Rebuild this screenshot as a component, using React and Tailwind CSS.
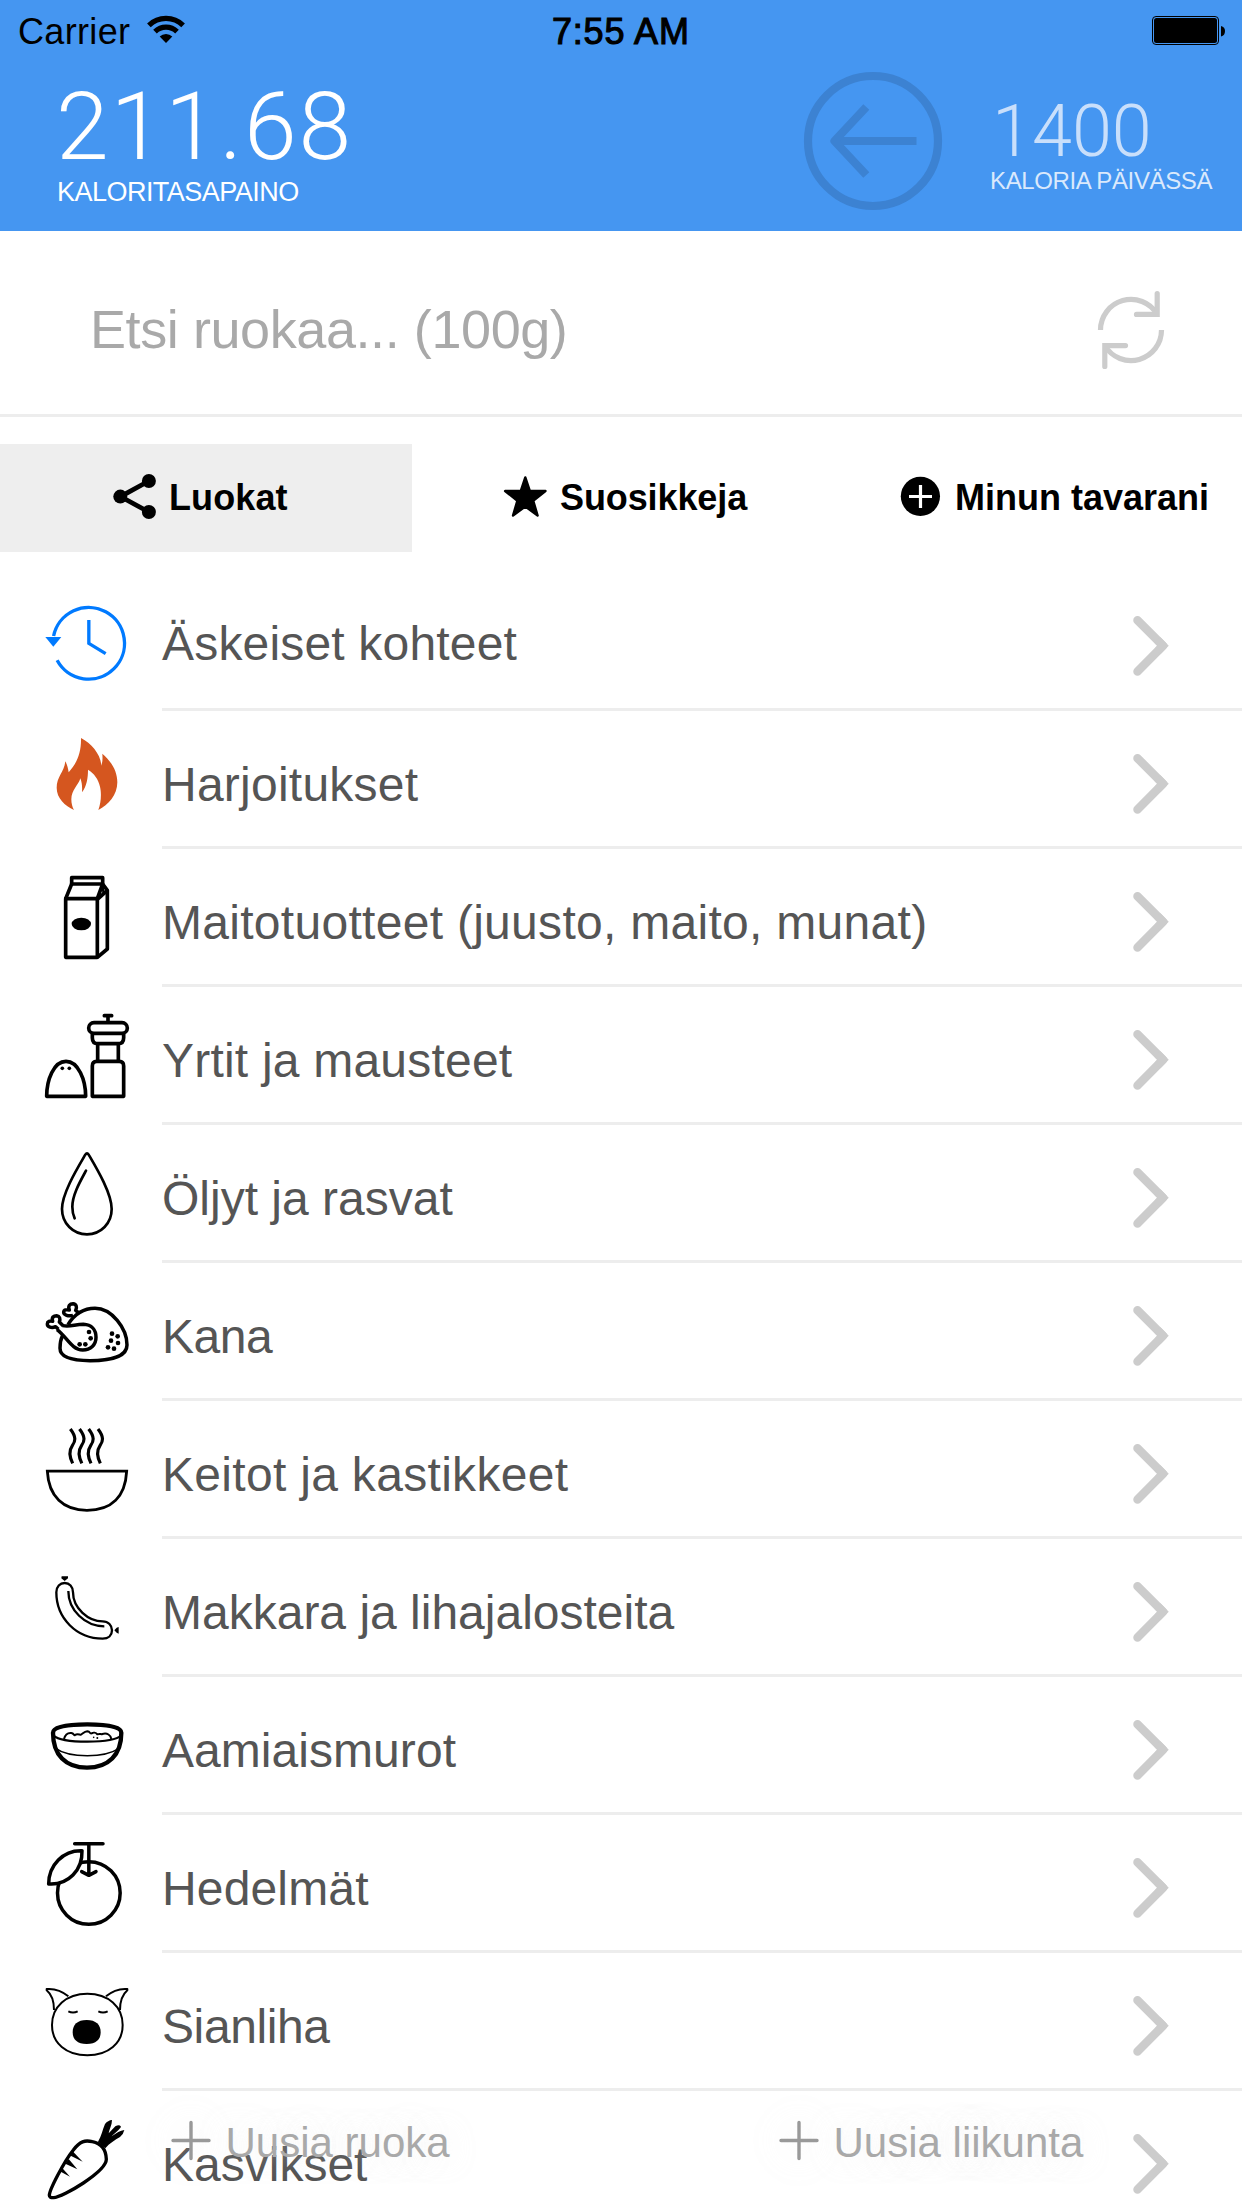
import React from "react";

/* Row icons share one canvas: a 100 x 138 slot drawn at three units per pixel. */
function RowIcon({ top, children }) {
  return (
    <svg
      className="h-[138px] w-[100px] shrink-0"
      viewBox={`108 ${top} 300 414`}
      fill="none"
      stroke="#000"
      strokeLinejoin="round"
    >
      {children}
    </svg>
  );
}

const RecentIcon = () => (
  <RowIcon top={-21}>
    <g stroke="#007aff" strokeWidth="10" strokeLinejoin="miter">
      <path d="M160.800 168 A107.500 107.500 0 1 1 171.400 241" />
      <path d="M266.500 120 V190 L317 221" />
    </g>
    <path d="M136 171 H184 L160 200 Z" fill="#007aff" stroke="none" />
  </RowIcon>
);

const FlameIcon = () => (
  <RowIcon top={393}>
    <path
      fill="#d5561f"
      stroke="none"
      d="M243 474 C275 490 303 525 304 557 C308 545 308 535 307 521 C330 540 352 570 352 607 C352 645 325 675 295 690 C303 670 305 640 300 620 C295 598 283 580 264 569 C264 595 260 618 246 637 C247 620 246 608 241 595 C236 615 214 630 214 658 C214 670 217 682 222 690 C195 677 170 655 170 623 C170 590 193 575 196 544 C202 555 204 565 206 577 C230 550 244 520 243 474 Z"
    />
  </RowIcon>
);

const MilkIcon = () => (
  <RowIcon top={-3}>
    <g strokeWidth="11">
      <path d="M197 146 H292 V322 H197 Z" />
      <path d="M215 102 L197 146 M308 102 L292 146" />
      <path d="M215 83 H308 V102 H215 Z" />
      <path d="M308 102 L322 121 V297 L292 322" />
      <path d="M292 148 L322 121" />
      <path d="M307 106 L311 130" strokeWidth="7" />
    </g>
    <ellipse cx="244" cy="222" rx="29" ry="19" fill="#000" stroke="none" />
  </RowIcon>
);

const SpiceIcon = () => (
  <RowIcon top={411}>
    <g strokeWidth="11">
      <path d="M140 739 H257 C257 690 235 634 198 634 C161 634 140 690 140 739 Z" />
      <path d="M277 739 V648 Q277 634 290 634 H358 Q371 634 371 648 V739 Z" />
      <path d="M293 582 V634 M355 582 V634" />
      <path d="M277 551 V563 Q277 581 294 581 H354 Q371 581 371 563 V551" />
      <rect x="266" y="518" width="116" height="32" rx="16" />
      <path d="M324 516 V498 M313 497 H335" strokeLinecap="round" />
    </g>
    <circle cx="187" cy="655" r="5.500" fill="#000" stroke="none" />
    <circle cx="208" cy="655" r="5.500" fill="#000" stroke="none" />
  </RowIcon>
);

const DropIcon = () => (
  <RowIcon top={-15}>
    <g strokeWidth="8" strokeLinecap="round">
      <path d="M256 74 Q261 66 266 74 C290 115 335 190 335 237 C335 280 303 313 261 313 C219 313 186 280 186 237 C186 190 232 115 256 74 Z" />
      <path d="M258 122 C240 155 217 195 217 230 Q217 250 224 265" />
    </g>
  </RowIcon>
);

const CHICKEN_DOTS = [
  [267, 606], [272, 625], [256, 643], [239, 643], [336, 611],
  [353, 619], [333, 632], [354, 639], [324, 652], [342, 656],
];

const ChickenIcon = () => (
  <RowIcon top={399}>
    <g strokeWidth="10.500">
      <path d="M204 584 C225 550 255 535 285 535 C335 535 381 595 381 645 C381 680 330 692 270 692 C215 692 180 682 180 655 C180 640 182 628 188 616" />
      <path d="M188 587 C210 592 225 583 250 583 C275 584 288 600 288 622 C288 645 272 660 248 660 C215 660 200 620 171 599" />
      <path d="M175 598 L167 590 C155 596 142 591 142 582 C142 574 150 572 158 574 C154 562 161 557 170 557 C179 558 182 567 178 576 L190 588" />
      <path d="M219 556 C205 560 191 555 191 547 C191 539 200 538 208 540 C203 528 210 521 219 521 C229 522 232 532 227 541 L238 550" />
    </g>
    {CHICKEN_DOTS.map(([x, y]) => (
      <circle key={`${x}-${y}`} cx={x} cy={y} r="7" fill="#000" stroke="none" />
    ))}
  </RowIcon>
);

const SoupIcon = () => (
  <RowIcon top={3}>
    <path strokeWidth="8.500" strokeLinejoin="miter" d="M142 213.500 H380 C376 290 335 331 261 331 C190 331 146 290 142 213.500 Z" />
    {[0, 27.5, 55, 83].map((dx) => (
      <path
        key={dx}
        strokeWidth="9.500"
        d={`M${211 + dx} 87 C${230 + dx} 112 ${226 + dx} 124 ${217 + dx} 137 C${208 + dx} 150 ${207 + dx} 168 ${218 + dx} 190`}
      />
    ))}
  </RowIcon>
);

const SausageIcon = () => (
  <RowIcon top={417}>
    <g strokeWidth="7">
      <path d="M169 577 C169 560 180 549 194 549 C208 549 219 560 219 577 C219 625 265 664 308 664 C325 664 336 676 336 691 C336 706 325 716 308 716 C230 716 169 655 169 577 Z" />
      <path d="M205 573 C205 630 255 679 313 679" />
    </g>
    <path d="M185 529 H204 V535 L194 543 L184 535 Z M356 681 V701 L350 698 L343 691 L350 683 Z" fill="#000" stroke="none" />
  </RowIcon>
);

const CerealIcon = () => (
  <RowIcon top={-9}>
    <path strokeWidth="13" d="M159 158 C159 140 205 133 262 133 C318 133 364 140 364 158 C364 225 325 263 261 263 C197 263 159 225 159 158 Z" />
    <path strokeWidth="6.500" d="M160 166 C175 180 220 185 262 185 C305 185 350 180 364 166" />
    <path strokeWidth="4.500" d="M168 206 C190 222 230 227 262 227 C300 227 335 220 356 206" />
    <path
      strokeWidth="6"
      d="M192 177 C196 162 205 158 214 159 C222 160 222 168 225 165 C232 160 240 165 243 164 C250 160 252 155 262 154 C272 155 268 162 275 160 C280 157 288 158 292 163 C300 160 303 164 307 162 C322 158 332 165 334 177"
    />
    <circle cx="281" cy="172" r="2.500" fill="#000" stroke="none" />
    <circle cx="292" cy="174" r="3" fill="#000" stroke="none" />
  </RowIcon>
);

const FruitIcon = () => (
  <RowIcon top={405}>
    <g strokeWidth="10.500">
      <circle cx="266.500" cy="639" r="94" />
      <path fill="#fff" d="M246 512 C190 510 146 555 146 612 C205 616 248 570 246 512 Z" />
      <path strokeLinecap="round" d="M224 491 H309 M266.500 491 V585 M245 575 L266.500 586 L288 575" />
    </g>
  </RowIcon>
);

const PigIcon = () => (
  <RowIcon top={-21}>
    <g strokeWidth="6">
      <path d="M262 101 C325 101 368 140 368 195 C368 250 325 286 262 286 C199 286 156 250 156 195 C156 140 199 101 262 101 Z" />
      <path d="M205 109 C185 92 165 85 140 87 V91 C157 105 162 125 162 150" />
      <path d="M318 109 C338 92 358 85 382 87 V91 C366 105 360 125 360 150" />
      <path d="M205 154 Q219 161 233 154 M295 154 Q309 161 323 154" />
    </g>
    <path
      fill="#000"
      stroke="none"
      d="M260 180 C288 180 302 194 302 217 C302 239 288 252 260 252 C232 252 218 239 218 217 C218 194 232 180 260 180 Z"
    />
  </RowIcon>
);

const CarrotIcon = () => (
  <RowIcon top={393}>
    <path strokeWidth="10" d="M148 706 C148 690 192 605 220 570 C240 543 255 540 277 545 C302 550 318 568 319 598 C319 635 188 712 161 713 Q148 714 148 706 Z" />
    <g fill="#000" stroke="none">
      <path d="M218 574 L248 605 L212 587 Z" />
      <path d="M206 597 L232 628 L196 611 Z" />
      <path d="M186 623 L210 650 L178 633 Z" />
      <path d="M294 545 C305 528 307 510 315 492 Q324 481 336 480 C336 495 328 508 326 520 L346 499 Q358 492 363 500 C360 508 345 518 335 529 C350 518 360 512 373 510 Q370 524 360 531 C345 540 328 550 316 565 Z" />
    </g>
  </RowIcon>
);

const CATEGORIES = [
  { label: "Äskeiset kohteet", Icon: RecentIcon, text: "mt-11 tracking-[0.18px]" },
  { label: "Harjoitukset", Icon: FlameIcon, text: "mt-[47px] tracking-[0.24px]" },
  { label: "Maitotuotteet (juusto, maito, munat)", Icon: MilkIcon, text: "mt-[47px] tracking-[0.29px]" },
  { label: "Yrtit ja mausteet", Icon: SpiceIcon, text: "mt-[47px] tracking-[0.21px]" },
  { label: "Öljyt ja rasvat", Icon: DropIcon, text: "mt-[47px]" },
  { label: "Kana", Icon: ChickenIcon, text: "mt-[47px] tracking-[-0.5px]" },
  { label: "Keitot ja kastikkeet", Icon: SoupIcon, text: "mt-[47px] tracking-[0.31px]" },
  { label: "Makkara ja lihajalosteita", Icon: SausageIcon, text: "mt-[47px]" },
  { label: "Aamiaismurot", Icon: CerealIcon, text: "mt-[47px] tracking-[0.05px]" },
  { label: "Hedelmät", Icon: FruitIcon, text: "mt-[47px] tracking-[0.15px]" },
  { label: "Sianliha", Icon: PigIcon, text: "mt-[47px] tracking-[-0.4px]" },
  { label: "Kasvikset", Icon: CarrotIcon, text: "mt-[47px]" },
];

function Chevron() {
  return (
    <svg className="mt-10 mr-[70px] h-[66px] w-[44px] shrink-0" viewBox="0 0 44 66" fill="none" stroke="#ccc">
      <path d="M9.500 7.200 L35 32.800 L9.500 58.400" strokeWidth="8.500" strokeLinecap="round" strokeLinejoin="round" />
      <path d="M29.500 27.200 L35 32.800 L29.500 38.400" strokeWidth="8.200" />
    </svg>
  );
}

function CategoryRow({ label, Icon, text }) {
  return (
    <li className="flex h-[138px] shrink-0 pl-9">
      <Icon />
      <div className="ml-[26px] flex flex-1 items-start justify-between border-b-[3px] border-[#ededed]">
        <span className={`text-[48px] leading-[53px] whitespace-nowrap text-[#555] ${text}`}>{label}</span>
        <Chevron />
      </div>
    </li>
  );
}

function StatusBar() {
  return (
    <div className="flex h-[60px] items-start text-[36px] leading-[41px] text-black">
      <div className="flex w-[552px] pl-[18px]">
        <span className="mt-[11px] tracking-[0.33px]">Carrier</span>
        <svg className="mt-3 ml-[14px] h-9 w-11" viewBox="143.500 12 44 36" fill="none" stroke="#000" strokeWidth="5.200">
          <path d="M148.400 25.300 A24.600 24.600 0 0 1 182.600 25.300" />
          <path d="M154.500 31.600 A15.900 15.900 0 0 1 176.500 31.600" />
          <path d="M165.500 43 L159.200 36.500 A9 9 0 0 1 171.800 36.500 Z" fill="#000" stroke="none" />
        </svg>
      </div>
      <span className="mt-[11px] tracking-[0.8px] [-webkit-text-stroke:1.1px_#000]">7:55 AM</span>
      <svg className="mt-4 mr-4 ml-auto h-[30px] w-[75px]" viewBox="1151 16 75 30">
        <rect x="1152.500" y="16.500" width="66" height="28" rx="3.500" fill="none" stroke="#000" />
        <rect x="1154" y="18" width="63" height="25" rx="2.500" />
        <path d="M1221 26 Q1225 27 1225 31 Q1225 35.500 1221 36.500 Z" />
      </svg>
    </div>
  );
}

function Header() {
  return (
    <header className="h-[231px] shrink-0 bg-[#4596f1]">
      <StatusBar />
      <div className="flex items-start text-white">
        <div className="w-[800px] pt-[18px] pl-[56px]">
          <div className="font-['Roboto',sans-serif] text-[95px] leading-[98px] font-light tracking-[1.8px]">211.68</div>
          <div className="mt-[1px] ml-[1px] text-[27px] leading-[30px] tracking-[-0.53px]">KALORITASAPAINO</div>
        </div>
        <svg className="mt-2 h-[146px] w-[146px] shrink-0" viewBox="800 68 146 146" fill="none" stroke="#3c82d2" strokeWidth="8.200">
          <circle cx="873" cy="141" r="65" />
          <path d="M916.500 141 H838" />
          <path d="M866.300 107 L834.500 141 L866.300 175" strokeLinejoin="round" />
        </svg>
        <div className="pt-[38px] pl-11 whitespace-nowrap">
          <div className="ml-0.5 font-['Roboto',sans-serif] text-[72px] leading-[68px] font-light text-[#c9dffb]">1400</div>
          <div className="mt-[2px] text-[24px] leading-[25px] tracking-[-0.38px] text-[#dae9fc]">KALORIA PÄIVÄSSÄ</div>
        </div>
      </div>
    </header>
  );
}

function SearchBar() {
  return (
    <div className="flex h-[186px] shrink-0 items-start justify-between border-b-[3px] border-[#ededed] pr-[71px] pl-[90px]">
      <span className="mt-[68px] text-[54px] leading-[60px] tracking-[-0.42px] text-[#a9a9a9]">Etsi ruokaa... (100g)</span>
      <svg className="mt-[54px] h-[90px] w-20" viewBox="1091 285 80 90" fill="none" stroke="#ccc" strokeWidth="5.200">
        <path d="M1100.500 330 A30.500 30.500 0 0 1 1157 314" />
        <path d="M1157.200 293.500 V314.400 H1136.500" strokeLinecap="round" />
        <path d="M1161.500 330 A30.500 30.500 0 0 1 1105 346" />
        <path d="M1104.800 366.500 V345.600 H1125.500" strokeLinecap="round" />
      </svg>
    </div>
  );
}

function Tabs() {
  return (
    <nav className="mt-[27px] flex h-[108px] shrink-0 items-start text-[36px] leading-[41px] font-bold whitespace-nowrap text-black">
      <div className="flex h-full w-[412px] bg-[#eee] pl-[110px]">
        <svg className="mt-7 h-[54px] w-[50px]" viewBox="110 472 50 54">
          <path d="M148.900 481 L120.500 496.600 L148.900 512" fill="none" stroke="#000" strokeWidth="4.800" />
          <circle cx="148.900" cy="481" r="7" />
          <circle cx="120.300" cy="496.600" r="7" />
          <circle cx="148.900" cy="512" r="7" />
        </svg>
        <span className="mt-[33px] ml-[9px] tracking-[0.1px]">Luokat</span>
      </div>
      <div className="flex h-full w-[430px] pl-[88px]">
        <svg className="mt-7 h-[50px] w-[52px]" viewBox="500 472 52 50">
          <path
            d="M525.300 477.500 L529.800 491 L545.500 491 L533.200 500.700 L537.600 515.500 L525.300 506.500 L513 515.500 L517.400 500.700 L505.100 491 L520.800 491 Z"
            stroke="#000"
            strokeWidth="2.400"
            strokeLinejoin="round"
          />
        </svg>
        <span className="mt-[33px] ml-2 tracking-[-0.1px]">Suosikkeja</span>
      </div>
      <div className="flex h-full flex-1 pl-[56px]">
        <svg className="mt-7 h-12 w-12" viewBox="898 472 48 48">
          <circle cx="920.400" cy="496.300" r="19.600" />
          <path d="M909 496.500 H932 M920.500 485 V508" stroke="#fff" strokeWidth="3.200" />
        </svg>
        <span className="mt-[33px] ml-[9px]">Minun tavarani</span>
      </div>
    </nav>
  );
}

function AddAction({ label, className }) {
  return (
    <div className={`flex items-start ${className}`}>
      <svg className="h-12 w-12 overflow-visible drop-shadow-[0_0_14px_rgba(235,235,235,0.5)]" viewBox="0 0 48 48" stroke="#999" strokeWidth="3.400" strokeLinecap="round">
        <path d="M6 22.500 H42 M24 4.500 V40.500" />
      </svg>
      <span className="mt-[1px] ml-[11px] text-[42px] leading-[47px] whitespace-nowrap text-[#a9a9a9] [text-shadow:0_0_24px_rgba(238,238,238,0.5)]">
        {label}
      </span>
    </div>
  );
}

export default function App() {
  return (
    <div className="relative flex h-[2208px] w-[1242px] flex-col overflow-hidden bg-white font-['Liberation_Sans',Arial,sans-serif]">
      <Header />
      <SearchBar />
      <Tabs />
      <ul className="mt-[21px] flex flex-col">
        {CATEGORIES.map((category) => (
          <CategoryRow key={category.label} {...category} />
        ))}
      </ul>
      <div className="absolute inset-x-0 bottom-0 flex h-[90px]">
        <AddAction label="Uusia ruoka" className="w-[608px] pl-[166.500px]" />
        <AddAction label="Uusia liikunta" className="pl-[166.500px]" />
      </div>
    </div>
  );
}
